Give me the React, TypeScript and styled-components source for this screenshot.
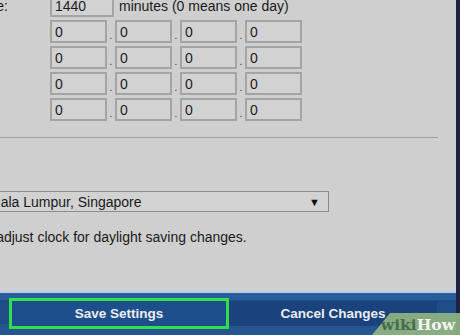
import React from "react";
import styled, { createGlobalStyle } from "styled-components";

const GlobalStyle = createGlobalStyle`
  html, body { margin: 0; padding: 0; background: #cfcfcf; }
  body { font-family: "Liberation Sans", Arial, sans-serif; }
`;

const Page = styled.div`
  display: flex;
  width: 460px;
  height: 335px;
  overflow: hidden;
  position: relative;
`;

const Main = styled.div`
  flex: 1;
  display: flex;
  flex-direction: column;
  min-width: 0;
`;

const RightEdge = styled.div`
  width: 4px;
  flex-shrink: 0;
  background: #1d2142;
`;

const Panel = styled.div`
  flex: 1;
  background: #cfcfcf;
  overflow: hidden;
  border-bottom: 2px solid #b9cde6;
`;

const Content = styled.div`
  margin: -6px 0 0 -120px;
  width: 558px;
  font-size: 14px;
  color: #1a1a1a;
`;

const FormSection = styled.div`
  display: flex;
  flex-direction: column;
  gap: 3px;
  padding-bottom: 16px;
  border-bottom: 1px solid #9c9fb2;
`;

const Row = styled.div`
  display: flex;
  align-items: center;
  height: 23px;
`;

const Label = styled.div`
  width: 158px;
  padding-left: 12px;
  flex-shrink: 0;
  white-space: nowrap;
`;

const Input = styled.div<{ $w?: number }>`
  box-sizing: border-box;
  width: ${(p) => p.$w ?? 57}px;
  height: 23px;
  border: 2px solid #a4a4a4;
  background: #d2d2d2;
  padding: 1px 0 0 3px;
  line-height: 18px;
  font-size: 14px;
  color: #1c1c1c;
  flex-shrink: 0;
`;

const Dot = styled.span`
  width: 8px;
  text-align: center;
  align-self: flex-end;
  font-size: 10px;
  line-height: 14px;
  color: #333;
`;

const Unit = styled.span`
  margin-left: 5px;
  white-space: nowrap;
`;

const TimeSection = styled.div`
  padding: 53px 0 0 12px;
  display: flex;
  flex-direction: column;
`;

const Select = styled.div`
  box-sizing: border-box;
  width: 437px;
  height: 21px;
  border: 1.5px solid #8c8c8c;
  background: #d2d2d2;
  display: flex;
  align-items: center;
  justify-content: space-between;
  padding: 0 8px 0 3px;
  white-space: nowrap;
`;

const Arrow = styled.span`
  font-size: 11px;
  color: #111;
`;

const CheckRow = styled.label`
  display: flex;
  align-items: center;
  margin-top: 17px;
  white-space: nowrap;
  line-height: 16px;
`;

const Check = styled.span`
  width: 13px;
  height: 13px;
  border: 1px solid #777;
  background: #eee;
  margin-right: 4px;
  box-sizing: border-box;
`;

const Bar = styled.div`
  height: 42px;
  flex-shrink: 0;
  background: linear-gradient(#2b5c9b 0, #2b5c9b 7px, #1f4d88 7px, #1f4d88 31px, #26568f 31px);
  display: flex;
  align-items: flex-start;
  padding: 8px 0 0 12px;
  box-sizing: border-box;
`;

const Button = styled.div<{ $w: number; $active?: boolean }>`
  width: ${(p) => p.$w}px;
  height: 25px;
  display: flex;
  align-items: center;
  justify-content: center;
  font-weight: bold;
  font-size: 13.5px;
  color: #ececec;
  background: ${(p) => (p.$active ? "#1d4f8d" : "#1a437e")};
  outline: ${(p) => (p.$active ? "3px solid #2fe04b" : "none")};
  margin-right: ${(p) => (p.$active ? 3 : 0)}px;
`;

const Watermark = styled.div`
  position: absolute;
  right: 0;
  bottom: 0;
  width: 88px;
  height: 22px;
  background: rgba(150, 185, 130, 0.88);
  clip-path: polygon(18px 0, 100% 0, 100% 100%, 0 100%);
  display: flex;
  align-items: flex-end;
  justify-content: flex-end;
  padding-right: 5px;
  box-sizing: border-box;
  font-family: "DejaVu Serif", "Liberation Serif", serif;
  font-weight: bold;
  font-size: 15.5px;
  line-height: 20px;
`;

const Wiki = styled.span`
  color: #476b4b;
`;
const How = styled.span`
  color: #f2f4ef;
`;

const ipRows = ["Static DNS 1:", "Static DNS 2:", "Static DNS 3:", "WINS:"];

export default function App() {
  return (
    <>
      <GlobalStyle />
      <Page>
        <Main>
          <Panel>
            <Content>
              <FormSection>
                <Row>
                  <Label>Client Lease Time:</Label>
                  <Input $w={64}>1440</Input>
                  <Unit>minutes (0 means one day)</Unit>
                </Row>
                {ipRows.map((l) => (
                  <Row key={l}>
                    <Label>{l}</Label>
                    <Input>0</Input>
                    <Dot>.</Dot>
                    <Input>0</Input>
                    <Dot>.</Dot>
                    <Input>0</Input>
                    <Dot>.</Dot>
                    <Input>0</Input>
                  </Row>
                ))}
              </FormSection>
              <TimeSection>
                <Select>
                  <span>(GMT+08:00) Kuala Lumpur, Singapore</span>
                  <Arrow>▼</Arrow>
                </Select>
                <CheckRow>
                  <Check />
                  Automatically adjust clock for daylight saving changes.
                </CheckRow>
              </TimeSection>
            </Content>
          </Panel>
          <Bar>
            <Button $w={214} $active>Save Settings</Button>
            <Button $w={208}>Cancel Changes</Button>
          </Bar>
        </Main>
        <RightEdge />
        <Watermark>
          <Wiki>wiki</Wiki>
          <How>How</How>
        </Watermark>
      </Page>
    </>
  );
}
